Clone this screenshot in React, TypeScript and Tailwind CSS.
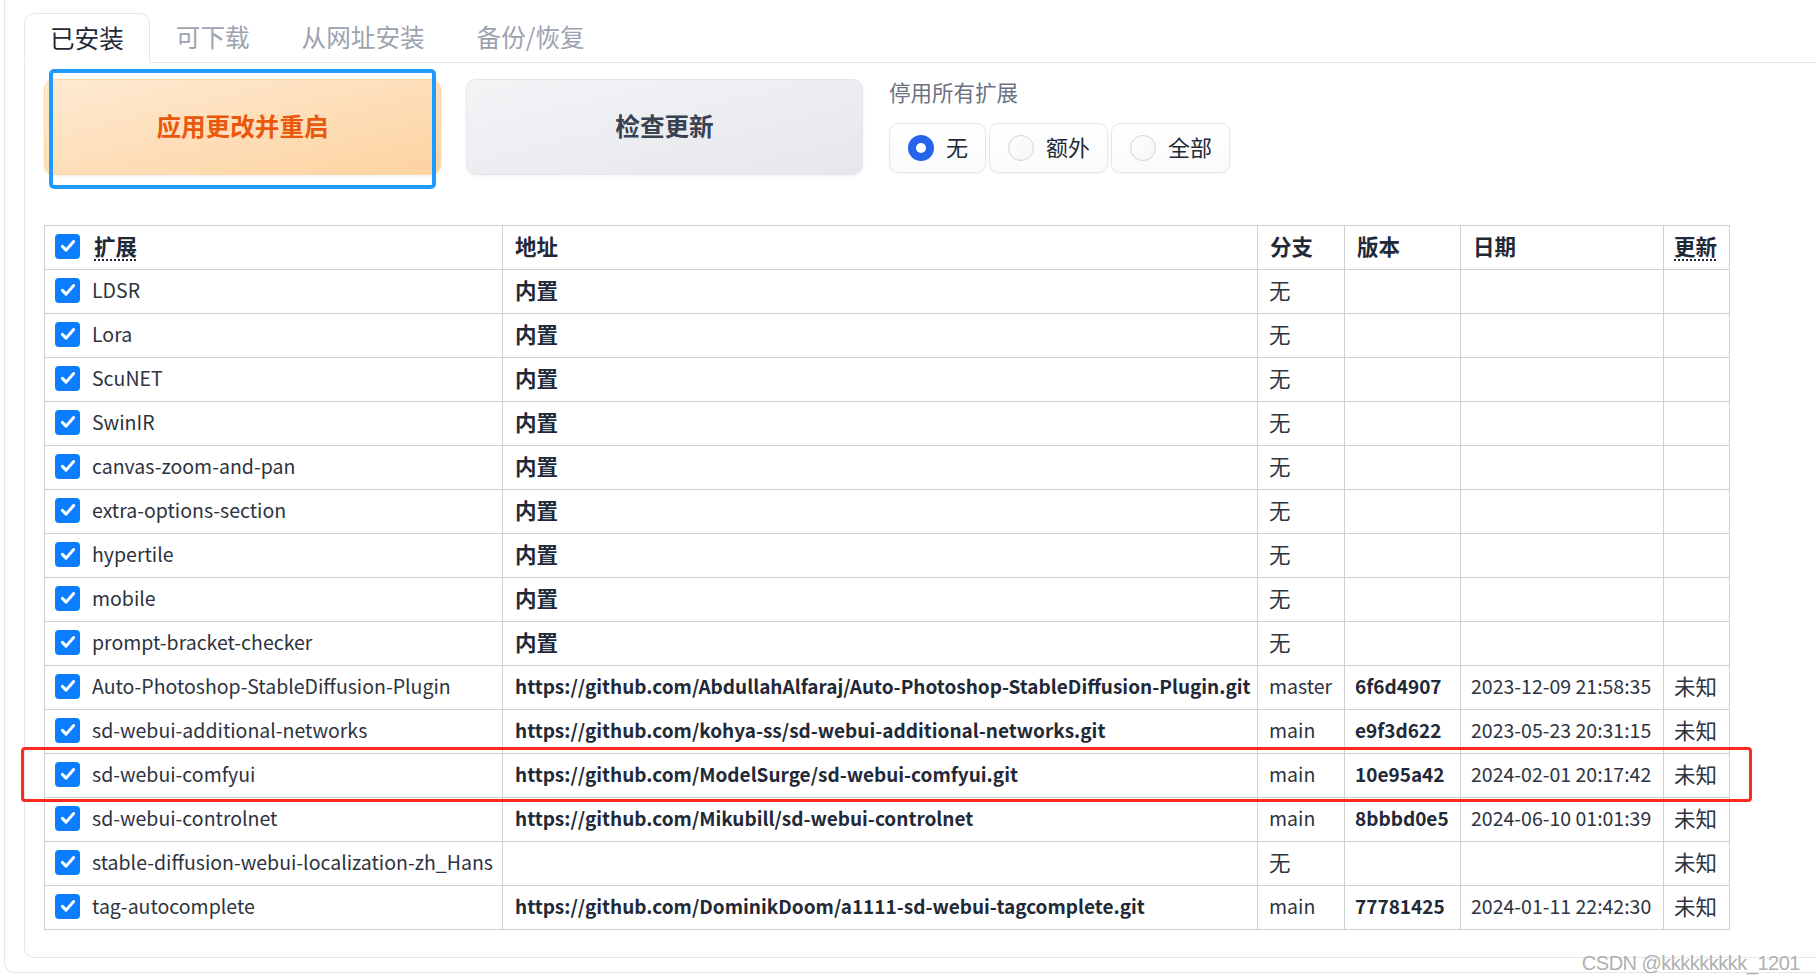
import React from "react"

type Row = {
  name: string
  url: string
  builtin?: boolean
  branch: string
  version?: string
  date?: string
  update?: string
}

const rows: Row[] = [
  { name: "LDSR", url: "内置", builtin: true, branch: "无" },
  { name: "Lora", url: "内置", builtin: true, branch: "无" },
  { name: "ScuNET", url: "内置", builtin: true, branch: "无" },
  { name: "SwinIR", url: "内置", builtin: true, branch: "无" },
  { name: "canvas-zoom-and-pan", url: "内置", builtin: true, branch: "无" },
  { name: "extra-options-section", url: "内置", builtin: true, branch: "无" },
  { name: "hypertile", url: "内置", builtin: true, branch: "无" },
  { name: "mobile", url: "内置", builtin: true, branch: "无" },
  { name: "prompt-bracket-checker", url: "内置", builtin: true, branch: "无" },
  {
    name: "Auto-Photoshop-StableDiffusion-Plugin",
    url: "https://github.com/AbdullahAlfaraj/Auto-Photoshop-StableDiffusion-Plugin.git",
    branch: "master",
    version: "6f6d4907",
    date: "2023-12-09 21:58:35",
    update: "未知",
  },
  {
    name: "sd-webui-additional-networks",
    url: "https://github.com/kohya-ss/sd-webui-additional-networks.git",
    branch: "main",
    version: "e9f3d622",
    date: "2023-05-23 20:31:15",
    update: "未知",
  },
  {
    name: "sd-webui-comfyui",
    url: "https://github.com/ModelSurge/sd-webui-comfyui.git",
    branch: "main",
    version: "10e95a42",
    date: "2024-02-01 20:17:42",
    update: "未知",
  },
  {
    name: "sd-webui-controlnet",
    url: "https://github.com/Mikubill/sd-webui-controlnet",
    branch: "main",
    version: "8bbbd0e5",
    date: "2024-06-10 01:01:39",
    update: "未知",
  },
  { name: "stable-diffusion-webui-localization-zh_Hans", url: "", branch: "无", update: "未知" },
  {
    name: "tag-autocomplete",
    url: "https://github.com/DominikDoom/a1111-sd-webui-tagcomplete.git",
    branch: "main",
    version: "77781425",
    date: "2024-01-11 22:42:30",
    update: "未知",
  },
]

const tabs = ["已安装", "可下载", "从网址安装", "备份/恢复"]

function CheckBox() {
  return (
    <span className="flex h-[25px] w-[25px] shrink-0 items-center justify-center rounded-[4px] bg-[#0b7dff]">
      <svg width="18" height="18" viewBox="0 0 24 24" fill="none">
        <path d="M4.5 12.5l5 5L19.5 6" stroke="white" strokeWidth="4" strokeLinecap="round" strokeLinejoin="round" />
      </svg>
    </span>
  )
}

function Radio({ label, checked }: { label: string; checked?: boolean }) {
  return (
    <div className="flex h-[50px] items-center gap-[12px] rounded-[9px] border border-[#e5e7eb] bg-linear-to-b from-white to-[#f9fafb] pl-[18px] pr-[17px] shadow-[0_1px_2px_rgba(0,0,0,0.05)]">
      {checked ? (
        <span className="flex h-[26px] w-[26px] items-center justify-center rounded-full bg-[#2563eb]">
          <span className="h-[10px] w-[10px] rounded-full bg-white" />
        </span>
      ) : (
        <span className="h-[26px] w-[26px] rounded-full border border-[#d1d5db] bg-linear-to-br from-white to-[#f3f4f6]" />
      )}
      <span className="pb-[4px] text-[22px] leading-none text-[#1f2937]">{label}</span>
    </div>
  )
}

// Latin text in Noto Sans CJK runs wider than the source font, so it gets a smaller size
const latin = "text-[19.5px]"
const cell = "border border-[#cfcfcf] pb-[3px] whitespace-nowrap"

export default function App() {
  return (
    <div className="relative h-[980px] w-[1816px] overflow-hidden bg-white font-['Noto_Sans_CJK_SC','Noto_Sans',sans-serif]">
      {/* outer block frame */}
      <div className="ml-[4px] h-[973px] w-[1900px] rounded-bl-[10px] border-b border-l border-[#e5e7eb] pl-[19px] pt-[13px]">
        {/* tab strip */}
        <div className="flex h-[50px] border-b border-[#e5e7eb]">
          {tabs.map((t, i) => (
            <div
              key={t}
              className={
                i === 0
                  ? "-mb-px flex h-[50px] items-center rounded-t-[10px] border border-[#e5e7eb] border-b-white bg-white px-[25px] pb-[2px] text-[24.6px] text-[#1f2937]"
                  : "flex h-[49px] items-center px-[26px] pb-[2px] text-[24.6px] text-[#9ca3af]"
              }
            >
              {t}
            </div>
          ))}
        </div>

        {/* tab panel */}
        <div className="h-[895px] rounded-bl-[10px] border-b border-l border-[#e5e7eb] pl-[19px] pt-[16px]">
          <div className="flex">
            <button className="flex h-[96px] w-[397px] items-center justify-center rounded-[10px] border border-[#fed7aa] bg-linear-to-br from-[#feead2] to-[#fdd3a0] pb-[3px] text-[24.6px] font-bold text-[#ea580c] shadow-[0_1px_3px_rgba(0,0,0,0.08)]">
              应用更改并重启
            </button>
            <button className="ml-[25px] flex h-[96px] w-[397px] items-center justify-center rounded-[10px] border border-[#e5e7eb] bg-linear-to-br from-[#f3f4f6] to-[#e5e7eb] pb-[3px] text-[24.6px] font-bold text-[#374151] shadow-[0_1px_3px_rgba(0,0,0,0.06)]">
              检查更新
            </button>
            <div className="ml-[26px] flex flex-col">
              <div className="h-[28px] text-[21.5px] leading-[26px] text-[#6b7280]">停用所有扩展</div>
              <div className="mt-[16px] flex gap-[3px]">
                <Radio label="无" checked />
                <Radio label="额外" />
                <Radio label="全部" />
              </div>
            </div>
          </div>

          <table className="mt-[50px] w-[1685px] table-fixed border-collapse text-[21.5px] text-[#1f2937]">
            <colgroup>
              <col className="w-[458px]" />
              <col className="w-[755px]" />
              <col className="w-[87px]" />
              <col className="w-[116px]" />
              <col className="w-[203px]" />
              <col className="w-[66px]" />
            </colgroup>
            <thead>
              <tr className="h-[44px]">
                <th className={`${cell} px-[10px] text-left font-bold`}>
                  <div className="flex items-center gap-[14px]">
                    <CheckBox />
                    <span className="underline decoration-dotted decoration-[2px] underline-offset-[5px]">扩展</span>
                  </div>
                </th>
                <th className={`${cell} px-[12px] text-left font-bold`}>地址</th>
                <th className={`${cell} px-[12px] text-left font-bold`}>分支</th>
                <th className={`${cell} px-[12px] text-left font-bold`}>版本</th>
                <th className={`${cell} px-[12px] text-left font-bold`}>日期</th>
                <th className={`${cell} px-[10px] text-left font-bold`}>
                  <span className="underline decoration-dotted decoration-[2px] underline-offset-[5px]">更新</span>
                </th>
              </tr>
            </thead>
            <tbody>
              {rows.map((r) => (
                <tr key={r.name} className="h-[44px]">
                  <td className={`${cell} px-[10px]`}>
                    <div className="flex items-center gap-[12px] text-[#2d3340]">
                      <CheckBox />
                      <span className={latin}>{r.name}</span>
                    </div>
                  </td>
                  <td
                    className={
                      r.builtin
                        ? `${cell} px-[12px] font-bold`
                        : `${cell} px-[12px] text-[19px] font-semibold`
                    }
                  >
                    {r.url}
                  </td>
                  <td
                    className={
                      r.branch === "无"
                        ? `${cell} px-[11px] text-[#2d3340]`
                        : `${cell} px-[11px] text-[19.5px] text-[#2d3340]`
                    }
                  >
                    {r.branch}
                  </td>
                  <td className={`${cell} px-[10px] text-[19px] font-semibold`}>{r.version}</td>
                  <td className={`${cell} px-[10px] text-[19.5px] text-[#2d3340]`}>{r.date}</td>
                  <td className={`${cell} px-[10px] text-[#2d3340]`}>{r.update}</td>
                </tr>
              ))}
            </tbody>
          </table>
        </div>
      </div>

      {/* focus ring around the primary button */}
      <div className="pointer-events-none absolute left-[49px] top-[69px] h-[120px] w-[387px] rounded-[5px] border-[4px] border-[#1f9bff]" />

      {/* red highlight on the comfyui row */}
      <div className="pointer-events-none absolute left-[21px] top-[747px] h-[55px] w-[1731px] rounded-[4px] border-[3px] border-[#ff2a1f]" />

      {/* watermark */}
      <div className="absolute right-[16px] top-[948px] font-['Liberation_Sans',sans-serif] text-[20px] tracking-[-0.5px] text-[#b0b0b0]">
        CSDN @kkkkkkkkk_1201
      </div>
    </div>
  )
}
